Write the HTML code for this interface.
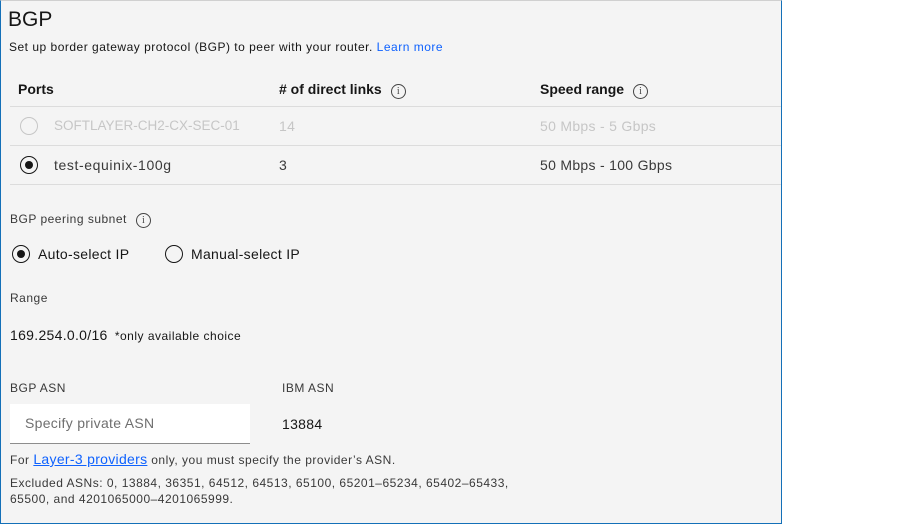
<!DOCTYPE html>
<html><head><style>
body{margin:0;width:909px;height:525px;background:#fff;font-family:"Liberation Sans",sans-serif;position:relative;overflow:hidden}
.p{position:absolute;left:0;top:0;width:780px;height:522px;background:#f4f4f4;border:1px solid #1470b8;border-top-color:#d0d0d0}
.a{position:absolute;white-space:nowrap}
.s{font-size:12px;letter-spacing:.5px}
.b{font-size:14px;letter-spacing:.3px}
.line{position:absolute;left:10px;width:771px;height:1px;background:#dcdcdc}
.rad{position:absolute;width:18px;height:18px;border:1.5px solid #161616;border-radius:50%;box-sizing:border-box}
.rad.on::after{content:"";position:absolute;left:3.5px;top:3.5px;width:8px;height:8px;border-radius:50%;background:#161616}
.info{display:inline-block;width:15px;height:15px;border:1px solid #444;border-radius:50%;box-sizing:border-box;font-size:10px;line-height:13px;text-align:center;color:#444;font-family:"Liberation Serif",serif;vertical-align:0px;margin-left:9px;letter-spacing:0;font-weight:normal}
</style></head><body>
<div class="p"></div>
<div class="a" style="left:8px;top:8px;font-size:21px;color:#161616">BGP</div>
<div class="a s" style="left:9px;top:40px;color:#161616">Set up border gateway protocol (BGP) to peer with your router. <span style="color:#0f62fe">Learn more</span></div>
<div class="a" style="left:18px;top:81px;font-size:14px;font-weight:bold;color:#161616">Ports</div>
<div class="a" style="left:279px;top:81px;font-size:14px;font-weight:bold;color:#161616"># of direct links<span class="info">i</span></div>
<div class="a" style="left:540px;top:81px;font-size:14px;font-weight:bold;color:#161616">Speed range<span class="info">i</span></div>
<div class="line" style="top:106px"></div>
<div class="rad" style="left:20px;top:117px;border-color:#c6c6c6"></div>
<div class="a" style="left:54px;top:118px;font-size:13.5px;color:#c6c6c6">SOFTLAYER-CH2-CX-SEC-01</div>
<div class="a b" style="left:279px;top:118px;color:#c6c6c6">14</div>
<div class="a b" style="left:540px;top:118px;color:#c6c6c6">50 Mbps - 5 Gbps</div>
<div class="line" style="top:145px"></div>
<div class="rad on" style="left:20px;top:156px"></div>
<div class="a b" style="left:54px;top:157px;color:#393939;letter-spacing:.6px">test-equinix-100g</div>
<div class="a b" style="left:279px;top:157px;color:#393939">3</div>
<div class="a b" style="left:540px;top:157px;color:#393939">50 Mbps - 100 Gbps</div>
<div class="line" style="top:184px"></div>
<div class="a s" style="left:10px;top:212px;color:#393939">BGP peering subnet<span class="info">i</span></div>
<div class="rad on" style="left:12px;top:245px"></div>
<div class="a b" style="left:38px;top:246px;color:#161616">Auto-select IP</div>
<div class="rad" style="left:165px;top:245px"></div>
<div class="a b" style="left:191px;top:246px;color:#161616">Manual-select IP</div>
<div class="a s" style="left:10px;top:291px;color:#393939">Range</div>
<div class="a b" style="left:10px;top:327px;color:#161616">169.254.0.0/16 <span class="s" style="margin-left:3px">*only available choice</span></div>
<div class="a s" style="left:10px;top:381px;color:#393939">BGP ASN</div>
<div class="a s" style="left:282px;top:381px;color:#393939">IBM ASN</div>
<div class="a" style="left:10px;top:404px;width:240px;height:39px;background:#fff;border-bottom:1px solid #8d8d8d"></div>
<div class="a b" style="left:25px;top:415px;color:#6f6f6f">Specify private ASN</div>
<div class="a b" style="left:282px;top:416px;color:#161616">13884</div>
<div class="a s" style="left:10px;top:451px;color:#393939">For <span style="color:#0f62fe;text-decoration:underline;font-size:14px;letter-spacing:.3px">Layer-3 providers</span> only, you must specify the provider’s ASN.</div>
<div class="a s" style="left:10px;top:475px;line-height:16px;color:#393939">Excluded ASNs: 0, 13884, 36351, 64512, 64513, 65100, 65201–65234, 65402–65433,<br>65500, and 4201065000–4201065999.</div>
</body></html>
